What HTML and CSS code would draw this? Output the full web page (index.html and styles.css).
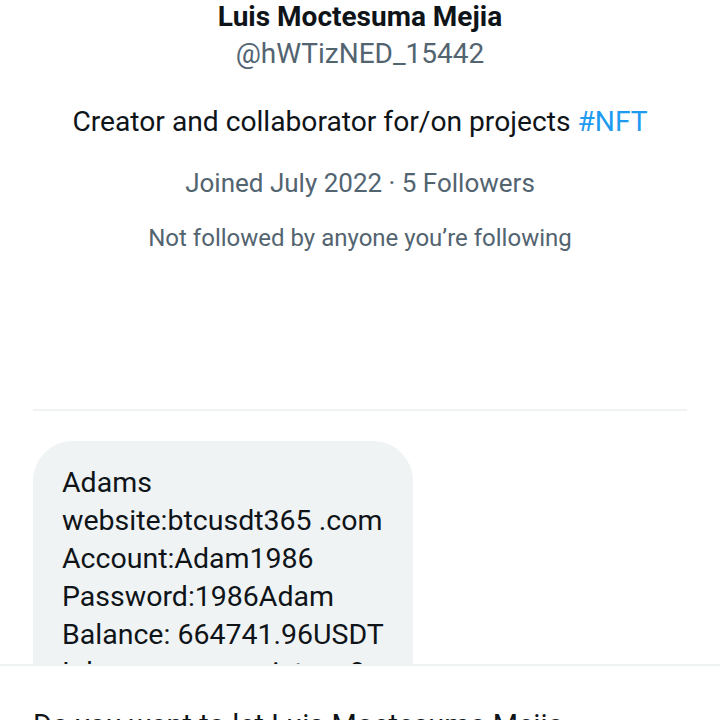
FILE: index.html
```html
<!DOCTYPE html>
<html lang="en">
<head>
<meta charset="utf-8">
<title>Message request</title>
<link rel="stylesheet" href="styles.css">
</head>
<body>
<div class="page">
  <section class="profile">
    <h1 class="name">Luis Moctesuma Mejia</h1>
    <div class="handle">@hWTizNED_15442</div>
    <p class="bio">Creator and collaborator for/on projects <span class="tag">#NFT</span></p>
    <div class="meta">Joined July 2022 · 5 Followers</div>
    <div class="mutual">Not followed by anyone you’re following</div>
  </section>
  <hr class="divider">
  <section class="thread">
    <div class="bubble">
      <div>Adams</div>
      <div>website:btcusdt365 .com</div>
      <div>Account:Adam1986</div>
      <div>Password:1986Adam</div>
      <div>Balance: 664741.96USDT</div>
      <div>I do, can you assist me?</div>
      <div>Thank you</div>
    </div>
  </section>
</div>
<div class="request">
  <p class="request-text">Do you want to let Luis Moctesuma Mejia message you? They won’t know you’ve seen it until you accept.</p>
</div>
</body>
</html>
```

FILE: styles.css
```css
html, body {
  margin: 0;
  padding: 0;
  background: #ffffff;
}
body {
  font-family: Roboto, "Noto Sans", "Liberation Sans", sans-serif;
  color: #0f1419;
  overflow: hidden;
  height: 720px;
}
.page {
  padding: 0 33px;
}
.profile {
  display: flex;
  flex-direction: column;
  align-items: center;
  text-align: center;
}
.name {
  margin: 0;
  font-size: 28px;
  font-weight: 700;
  line-height: 34px;
}
.handle {
  font-size: 28px;
  line-height: 40px;
  color: #536471;
}
.bio {
  margin: 30px 0 0;
  font-size: 28.2px;
  line-height: 36px;
}
.tag {
  color: #1d9bf0;
}
.meta {
  margin-top: 27px;
  font-size: 26px;
  line-height: 32px;
  color: #536471;
}
.mutual {
  margin-top: 24px;
  font-size: 24px;
  line-height: 30px;
  color: #536471;
}
.divider {
  margin: 156px 0 0;
  border: 0;
  height: 2px;
  background: #eff3f4;
}
.thread {
  padding-top: 30px;
  display: flex;
}
.bubble {
  box-sizing: border-box;
  max-width: 380px;
  background: #eff3f4;
  border-radius: 40px 40px 40px 8px;
  padding: 23px 29px 24px;
  font-size: 28.5px;
  line-height: 38px;
  color: #0f1419;
}
.request {
  position: absolute;
  left: 0;
  right: 0;
  top: 664px;
  height: 400px;
  background: #ffffff;
  border-top: 2px solid #eff3f4;
  padding: 0 33px;
}
.request-text {
  margin: 40px 0 0;
  font-size: 29px;
  line-height: 38px;
  color: #0f1419;
}
```
